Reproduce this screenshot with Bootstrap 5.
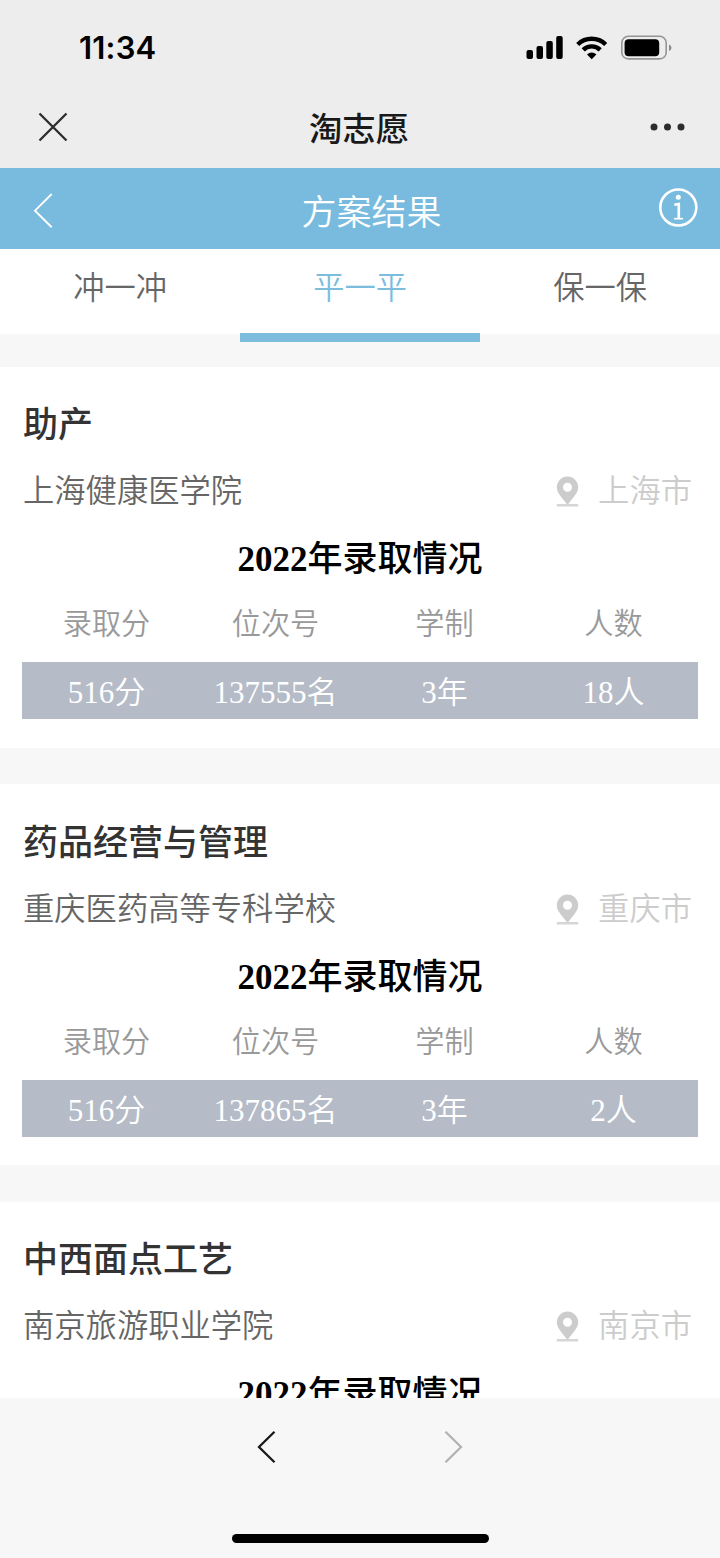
<!DOCTYPE html>
<html lang="zh-CN">
<head>
<meta charset="utf-8">
<meta name="viewport" content="width=device-width, initial-scale=1">
<title>淘志愿</title>
<link href="https://cdn.jsdelivr.net/npm/bootstrap@5.3.0/dist/css/bootstrap.min.css" rel="stylesheet">
<style>
  body { font-family: "Noto Sans CJK SC", sans-serif; color: #333; }
  .phone { width: 720px; height: 1558px; background: #f7f7f7; }
  .chrome-top { height: 168px; background: #ededed; }
  .status-row { height: 96px; padding: 0 48px 0 79px; }
  .clock { font: 600 31px/38px Inter, sans-serif; color: #000; letter-spacing: .2px; }
  .wx-row { height: 72px; padding: 0 35px 10px 38px; }
  .wx-title { font-size: 33.4px; line-height: 44px; padding-bottom: 1px; font-weight: 500; color: #191919; }
  .app-head { height: 81px; background: #78bbde; padding: 3px 22px 0 33px; }
  .app-title { font-size: 35px; line-height: 48px; font-weight: 350; color: #fff; padding-left: 12px; }
  .tabs { height: 85px; }
  .tabs .nav-link { height: 92.500px; padding: 13.500px 0 0; font-size: 31.25px; line-height: 46px; color: #666; border-radius: 0; font-weight: 350; border-bottom: 9.5px solid transparent; }
  .tabs .nav-link.active { color: #7cbddd; border-color: #7cbddd; }
  .results { height: 1064px; padding-top: 33px; }
  .plan { height: 380.7px; margin-bottom: 36.6px; padding: 31.400px 22px 0; }
  .major { font-size: 35px; line-height: 48px; font-weight: 500; margin: 0 0 20px 1px; }
  .school-line { font-size: 31.3px; line-height: 46px; font-weight: 350; color: #666; padding: 0 6px 0 1px; }
  .city { color: #ccc; gap: 19px; }
  .city svg { position: relative; top: 2px; }
  .year-title { font: 700 35px/48px "Liberation Serif", "Noto Sans CJK SC", serif; color: #000; margin: 20px 0 0; }
  .year-title span { font-family: "Noto Sans CJK SC", sans-serif; font-weight: 500; }
  .labels { font-size: 29.2px; line-height: 44px; color: #999; font-weight: 350; margin-top: 15px; }
  .figures { font: 350 31px/57px "Liberation Serif", "Noto Sans CJK SC", serif; height: 57px; background: #b5bbc7; color: #fff; margin-top: 19px; padding-top: 2px; }
  .bottom-bar { height: 160px; background: #f7f7f7; }
  .pager { padding: 32px 257px 0; height: 136px; }
  .home-pill { width: 257px; height: 9px; border-radius: 5px; background: #000; }
</style>
</head>
<body>
<div class="phone d-flex flex-column overflow-hidden">
  <header class="chrome-top flex-shrink-0">
    <div class="status-row d-flex align-items-center justify-content-between">
      <span class="clock">11:34</span>
      <svg width="146" height="26" viewBox="526 35 146 26" aria-hidden="true">
        <rect x="526.5" y="50" width="6.5" height="9" rx="2"/><rect x="536.5" y="46" width="6.5" height="13" rx="2"/><rect x="546.3" y="41" width="6.5" height="18" rx="2"/><rect x="556.2" y="36" width="6.5" height="23" rx="2"/>
        <g fill="none" stroke="#000" stroke-width="4.4"><path d="M577.7 44.5a20 20 0 0 1 28 0"/><path d="M583.2 49.8a12.2 12.2 0 0 1 17 0"/></g>
        <path d="M591.7 59.2l-4.7-4.8a6.8 6.8 0 0 1 9.4 0z"/>
        <rect x="621.8" y="36.3" width="44.4" height="22.6" rx="6.5" fill="none" stroke="#959595" stroke-width="1.6"/>
        <rect x="624.6" y="39.2" width="34.6" height="17" rx="4"/>
        <path d="M669 44.5q2.5 1 2.5 3.2t-2.5 3.2z" fill="#8b8b8b"/>
      </svg>
    </div>
    <div class="wx-row d-flex align-items-center justify-content-between">
      <svg width="30" height="30" viewBox="0 0 30 30" fill="none" stroke="#2c2c2c" stroke-width="2.3"><path d="M1.500 1.500l27 27M28.500 1.500l-27 27"/></svg>
      <span class="wx-title">淘志愿</span>
      <svg width="35" height="8" viewBox="0 0 35 8" fill="#2c2c2c"><circle cx="4" cy="4" r="3.500"/><circle cx="17.500" cy="4" r="3.500"/><circle cx="31" cy="4" r="3.500"/></svg>
    </div>
  </header>
  <div class="app-head d-flex align-items-center justify-content-between flex-shrink-0">
    <svg width="40" height="36" viewBox="0 0 40 36" fill="none" stroke="#fff" stroke-width="1.9"><path d="M18.700 2L2 18.700l16.700 16.500"/></svg>
    <span class="app-title">方案结果</span>
    <svg width="40" height="46" viewBox="658 187 40 46" fill="none" stroke="#fff"><circle cx="678.3" cy="207.500" r="18" stroke-width="2.600"/><circle cx="678.3" cy="197.300" r="2.500" fill="#fff" stroke="none"/><path d="M674.300 204.700l4.500-.7v14.500" stroke-width="2.600"/><path d="M674 218.700h9" stroke-width="1.600"/></svg>
  </div>
  <nav class="tabs nav nav-justified bg-white flex-shrink-0 flex-nowrap align-items-start position-relative">
    <a class="nav-link">冲一冲</a>
    <a class="nav-link active">平一平</a>
    <a class="nav-link">保一保</a>
  </nav>
  <main class="results overflow-hidden flex-shrink-0"></main>
  <footer class="bottom-bar flex-shrink-0 d-flex flex-column">
    <div class="pager d-flex justify-content-between align-items-start">
      <svg width="20" height="34" viewBox="0 0 20 34" fill="none" stroke="#191919" stroke-width="2.300"><path d="M17.500 1.800L2 17l15.500 15.200"/></svg>
      <svg width="20" height="34" viewBox="0 0 20 34" fill="none" stroke="#b2b2b2" stroke-width="2.300"><path d="M2.500 1.800L18 17 2.500 32.200"/></svg>
    </div>
    <div class="home-pill mx-auto"></div>
  </footer>
</div>
<script src="https://cdn.jsdelivr.net/npm/bootstrap@5.3.0/dist/js/bootstrap.bundle.min.js"></script>
<script>
  const plans = [
    ['助产', '上海健康医学院', '上海市', ['516分', '137555名', '3年', '18人']],
    ['药品经营与管理', '重庆医药高等专科学校', '重庆市', ['516分', '137865名', '3年', '2人']],
    ['中西面点工艺', '南京旅游职业学院', '南京市', []]
  ];
  const cells = list => list.map(t => `<div class="col">${t}</div>`).join('');
  document.querySelector('.results').innerHTML = plans.map(([major, school, city, nums]) => `
    <section class="plan bg-white">
      <h2 class="major">${major}</h2>
      <div class="school-line d-flex justify-content-between">
        <span>${school}</span>
        <span class="city d-flex align-items-center">
          <svg width="23" height="32" viewBox="0 0 23 32" fill="#ccc"><path fill-rule="evenodd" d="M11.500 1.500A10.700 10.700 0 0 0 .8 12.200C.8 18 6 22.500 10.300 28.500q1.200 1.500 2.400 0C17 22.500 22.200 18 22.200 12.200A10.700 10.700 0 0 0 11.500 1.500zM11.500 7.700a4.500 4.500 0 1 1 0 9 4.500 4.500 0 0 1 0-9z"/><path d="M.8 29h21.400v2.500H.8z" opacity=".8"/></svg>
          ${city}
        </span>
      </div>
      <h3 class="year-title text-center">2022<span>年录取情况</span></h3>
      ${nums.length ? `<div class="labels row g-0 text-center">${cells(['录取分', '位次号', '学制', '人数'])}</div>
      <div class="figures row g-0 text-center">${cells(nums)}</div>` : ''}
    </section>`).join('');
</script>
</body>
</html>
